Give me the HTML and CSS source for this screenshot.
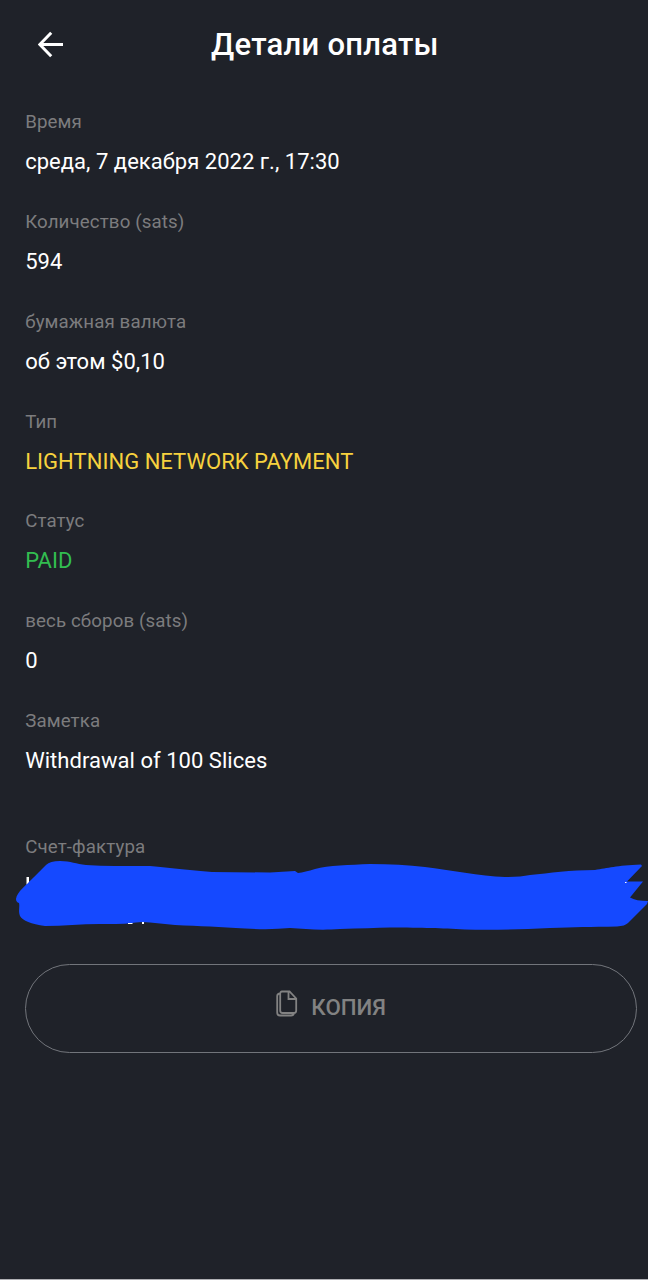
FILE: index.html
```html
<!DOCTYPE html>
<html lang="ru">
<head>
<meta charset="utf-8">
<title>Детали оплаты</title>
<link rel="stylesheet" href="styles.css">
</head>
<body>
<div class="screen">
  <header class="header">
    <svg class="back" width="26" height="27" viewBox="0 0 26 27"><path d="M25 13.500H2M13.200 1.700L1.800 13.500l11.400 11.800"/></svg>
    <h1 class="title">Детали оплаты</h1>
  </header>
  <main class="details">
    <section class="item"><div class="label">Время</div><div class="value">среда, 7 декабря 2022 г., 17:30</div></section>
    <section class="item"><div class="label">Количество (sats)</div><div class="value">594</div></section>
    <section class="item"><div class="label">бумажная валюта</div><div class="value">об этом $0,10</div></section>
    <section class="item"><div class="label">Тип</div><div class="value network">LIGHTNING NETWORK PAYMENT</div></section>
    <section class="item"><div class="label">Статус</div><div class="value paid">PAID</div></section>
    <section class="item"><div class="label">весь сборов (sats)</div><div class="value">0</div></section>
    <section class="item note"><div class="label">Заметка</div><div class="value">Withdrawal of 100 Slices</div></section>
    <section class="invoice">
      <div class="label">Счет-фактура</div>
      <svg class="scribble" width="648" height="80" viewBox="0 855 648 80">
        <path class="ink" d="M16 899C17 892 26 885 34 877L46 865Q50 861 60 861C71 861 76 864 86 865Q100 866 115 866L150 866C165 867 175 869 190 870Q200 871 212 872L270 872.500 295 871 298 873Q305 872 315 869C328 865 350 865 370 864Q400 864 425 867C450 870 480 876 505 877Q520 877 530 875C550 873 570 870 595 870C608 868 616 865.500 641 864.500L642 866 627 881.500 643 881.500 630 897.500Q636 901 648 901L647 904 628 923Q625 926 617 926.500C590 927 575 927 550 928Q500 930.500 465 929.500C440 928 425 928 390 927.500Q370 928 340 929C320 930.500 305 929 290 928Q270 930 245 928.500C220 927 200 926 175 925L150 922.500Q142 921.500 136 922.500 128 924 105 924C85 923.500 65 926 45 926Q24 923 20 916C18 911 20 907 19 903Q16 902 16 899Z"/>
        <path class="trace" d="M26.500 877h2.500v5l-2.500 2.500zM128 923h5l-1 1h-4zM142 922h2v2h-2zM625 882h1.500v1h-1.500z"/>
      </svg>
    </section>
    <button class="copy">
      <svg class="copy-icon" width="22" height="27" viewBox="0 0 22 27"><path d="M6 1.500H13.500L20.200 8.500V20.500Q20.200 23 18 23H6.500Q4.200 23 4.200 20.500V3.500Q4.200 1.500 6 1.500ZM12.500 1.500V9H20.200M4 3.500Q1.200 3.500 1.200 6V22.500Q1.200 25.500 4 25.500H15Q17.500 25.500 18 23"/></svg>
      <span class="copy-text">КОПИЯ</span>
    </button>
  </main>
</div>
</body>
</html>
```

FILE: styles.css
```css
* { box-sizing: border-box; }
body { margin: 0; background: #1f2229; font-family: Roboto, "Noto Sans", sans-serif; }
.screen { width: 648px; height: 1280px; overflow: hidden; border-bottom: 1px solid #b0b0b4; }
.header { height: 102px; padding: 31px 0 0 38px; display: grid; grid-template-columns: 173px 1fr; align-items: start; }
.back { fill: none; stroke: #fff; stroke-width: 3; }
.title { margin: -4px 0 0; font-size: 31px; line-height: 36px; font-weight: 500; color: #fff; letter-spacing: 0.25px; white-space: nowrap; }
.details { padding-left: 25px; }
.item { height: 99.85px; }
.note { height: 125.5px; }
.label { height: 40px; line-height: 40px; font-size: 18.7px; letter-spacing: 0.12px; color: #7c7c7e; }
.value { height: 40px; line-height: 40px; font-size: 22px; color: #fff; letter-spacing: 0.03px; white-space: nowrap; }
.network { color: #f7d23e; }
.paid { color: #32bd50; }
.label, .value { padding-left: 0.2px; }
.invoice { height: 137.4px; }
.scribble { display: block; margin: -11.6px 0 0 -25px; }
.ink { fill: #1549ff; }
.trace { fill: #fff; }
.copy { width: 612px; height: 89px; padding: 0 0 4px; border: 1px solid #72757b; border-radius: 45px; background: none; display: flex; align-items: center; justify-content: center; gap: 13.4px; font-family: inherit; color: #828282; }
.copy-icon { fill: none; stroke: #828282; stroke-width: 1.8; margin-top: -5px; }
.copy-text { margin-top: 1px; font-size: 22.3px; line-height: 28px; font-weight: 500; }
```
